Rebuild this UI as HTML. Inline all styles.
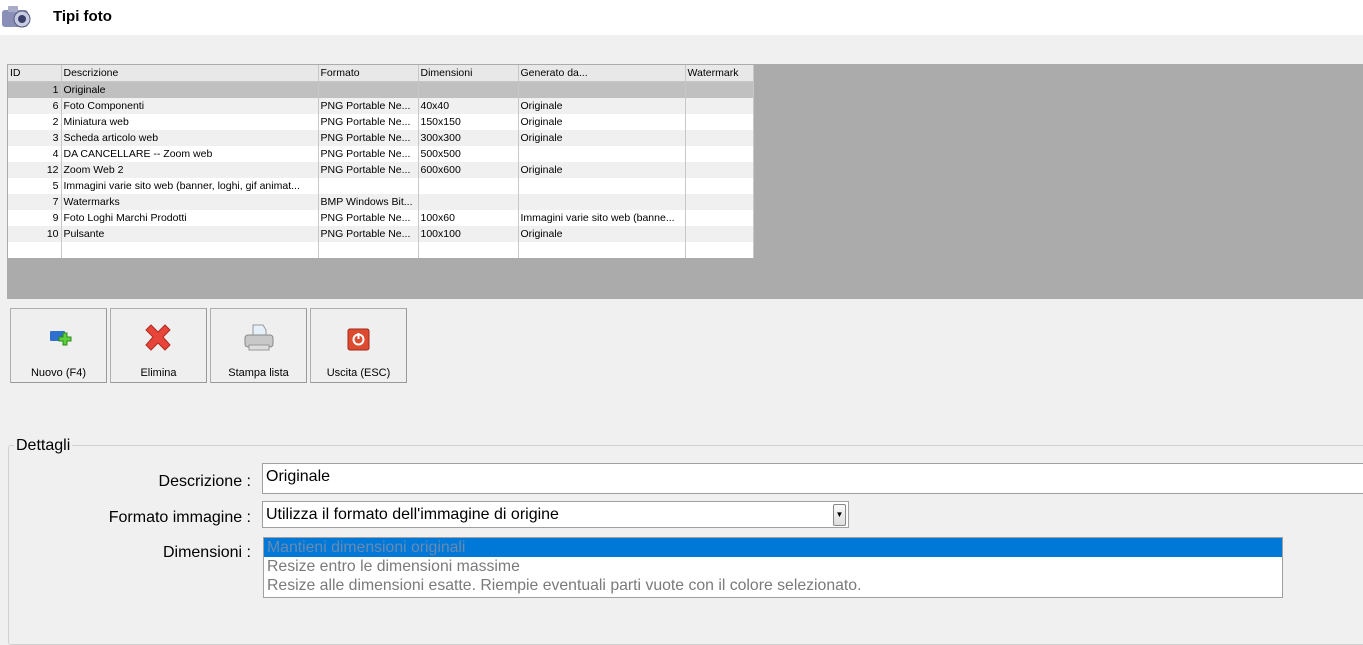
<!DOCTYPE html>
<html><head><meta charset="utf-8"><style>
*{margin:0;padding:0;box-sizing:border-box}
body{width:1363px;height:624px;background:#f0f0f0;font-family:"Liberation Sans",Tahoma,sans-serif;position:relative;overflow:hidden}
.top{position:absolute;left:0;top:0;width:1363px;height:35px;background:#fff}
.title{position:absolute;left:53px;top:7px;font-size:15px;font-weight:bold;color:#000}
.grid{position:absolute;left:7px;top:64px;width:1356px;height:235px;background:#ababab}
table{position:absolute;left:1px;top:1px;border-collapse:collapse;font-size:10.5px;background:#fff;table-layout:fixed;width:745px}
td{height:16px;padding:0 2px;border-right:1px solid #c8c8c8;white-space:nowrap;overflow:hidden;color:#000;line-height:16px}
tr.h td{background:#e8e8e8;border-bottom:1px solid #c8c8c8;height:16px}
tr.s td{background:#c0c0c0}
tr.g td{background:#f0f0f0}
td.n{text-align:right}
.btn{position:absolute;top:308px;width:97px;height:75px;background:#efefef;border:1px solid #adadad;border-right-color:#999;border-bottom-color:#999;font-size:11px;text-align:center}
.btn span{position:absolute;left:0;right:0;top:58px}
.btn svg{position:absolute;left:34px;top:16px}
fieldset{position:absolute;left:8px;top:445px;width:1370px;height:200px;border:1px solid #d0d0d0;border-radius:3px}
.leg{position:absolute;left:14px;top:437px;font-size:16px;background:#f0f0f0;padding:0 2px;color:#000}
.lab{position:absolute;font-size:16px;text-align:right;width:240px;left:11px;color:#000}
.inp{position:absolute;background:#fff;border:1px solid #a0a0a0;font-size:16px;padding-left:3px}
</style></head><body>
<div class="top"></div>
<svg style="position:absolute;left:0;top:2px" width="34" height="28" viewBox="0 0 34 28"><rect x="2" y="8" width="26" height="17" rx="3" fill="#8a8fb8"/><rect x="8" y="4" width="10" height="6" rx="1" fill="#a8acc8"/><circle cx="22" cy="17" r="8" fill="#c8cce0" stroke="#555a80"/><circle cx="22" cy="17" r="4" fill="#3a3f6a"/></svg>
<div class="title" style="top:8px">Tipi foto</div>
<div class="grid">
<table>
<colgroup><col style="width:53px"><col style="width:257px"><col style="width:100px"><col style="width:100px"><col style="width:167px"><col style="width:68px"></colgroup>
<tr class="h"><td>ID</td><td>Descrizione</td><td>Formato</td><td>Dimensioni</td><td>Generato da...</td><td>Watermark</td></tr>
<tr class="s"><td class="n">1</td><td>Originale</td><td></td><td></td><td></td><td></td></tr>
<tr class="g"><td class="n">6</td><td>Foto Componenti</td><td>PNG Portable Ne...</td><td>40x40</td><td>Originale</td><td></td></tr>
<tr><td class="n">2</td><td>Miniatura web</td><td>PNG Portable Ne...</td><td>150x150</td><td>Originale</td><td></td></tr>
<tr class="g"><td class="n">3</td><td>Scheda articolo web</td><td>PNG Portable Ne...</td><td>300x300</td><td>Originale</td><td></td></tr>
<tr><td class="n">4</td><td>DA CANCELLARE -- Zoom web</td><td>PNG Portable Ne...</td><td>500x500</td><td></td><td></td></tr>
<tr class="g"><td class="n">12</td><td>Zoom Web 2</td><td>PNG Portable Ne...</td><td>600x600</td><td>Originale</td><td></td></tr>
<tr><td class="n">5</td><td>Immagini varie sito web (banner, loghi, gif animat...</td><td></td><td></td><td></td><td></td></tr>
<tr class="g"><td class="n">7</td><td>Watermarks</td><td>BMP Windows Bit...</td><td></td><td></td><td></td></tr>
<tr><td class="n">9</td><td>Foto Loghi Marchi Prodotti</td><td>PNG Portable Ne...</td><td>100x60</td><td>Immagini varie sito web (banne...</td><td></td></tr>
<tr class="g"><td class="n">10</td><td>Pulsante</td><td>PNG Portable Ne...</td><td>100x100</td><td>Originale</td><td></td></tr>
<tr><td></td><td></td><td></td><td></td><td></td><td></td></tr>
</table></div>
<div class="btn" style="left:10px"><svg width="28" height="24"><rect x="5" y="6" width="15" height="10" rx="1" fill="#2f6fd0"/><path d="M17 12h4v-4h4v4h4v4h-4v4h-4v-4h-4z" transform="translate(-3,0)" fill="#5bd03a" stroke="#2a8a1a"/></svg><span>Nuovo (F4)</span></div>
<div class="btn" style="left:110px"><svg width="30" height="30" style="left:32px;top:14px"><path d="M3 7l5-5 7 7 7-7 5 5-7 7 7 8-5 5-7-7-7 7-5-5 7-8z" fill="#e8453a" stroke="#b02a20"/></svg><span>Elimina</span></div>
<div class="btn" style="left:210px"><svg width="32" height="30" style="left:32px;top:14px"><path d="M10 2h10l3 5v6H10z" fill="#e6f0fa" stroke="#999"/><rect x="2" y="12" width="28" height="12" rx="3" fill="#c8c8c8" stroke="#888"/><rect x="6" y="22" width="20" height="5" fill="#ddd" stroke="#999"/></svg><span>Stampa lista</span></div>
<div class="btn" style="left:310px"><svg width="24" height="24" style="left:36px;top:19px"><rect x="1" y="1" width="21" height="21" rx="2" fill="#dc4a30" stroke="#a02a18"/><circle cx="11.5" cy="11.5" r="5" fill="none" stroke="#fff" stroke-width="2"/><rect x="10.5" y="5" width="2" height="6" fill="#fff"/></svg><span>Uscita (ESC)</span></div>
<fieldset></fieldset>
<div class="leg">Dettagli</div>
<div class="lab" style="top:473px">Descrizione :</div>
<div class="lab" style="top:509px">Formato immagine :</div>
<div class="lab" style="top:544px">Dimensioni :</div>
<div class="inp" style="left:262px;top:463px;width:1110px;height:31px;line-height:26px">Originale</div>
<div class="inp" style="left:262px;top:501px;width:587px;height:27px;line-height:26px">Utilizza il formato dell'immagine di origine<div style="position:absolute;right:2px;top:2px;width:13px;height:22px;border:1px solid #888;border-radius:2px;background:linear-gradient(#fafafa,#ddd);font-size:8px;line-height:20px;text-align:center">▼</div></div>
<div class="inp" style="left:263px;top:537px;width:1020px;height:61px;font-size:15.8px;line-height:19px;color:#7a7a7a;padding-left:0"><div style="background:#0078d7;color:#6a8bb0;padding-left:3px;height:19px">Mantieni dimensioni originali</div><div style="padding-left:3px">Resize entro le dimensioni massime</div><div style="padding-left:3px">Resize alle dimensioni esatte. Riempie eventuali parti vuote con il colore selezionato.</div></div>
</body></html>
